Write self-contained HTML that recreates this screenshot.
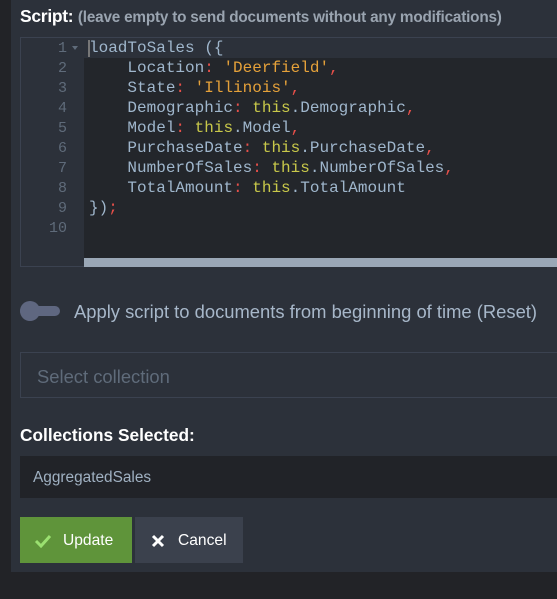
<!DOCTYPE html>
<html><head><meta charset="utf-8"><style>
*{margin:0;padding:0;box-sizing:border-box}
body{width:557px;height:599px;background:#222327;overflow:hidden;font-family:"Liberation Sans",sans-serif;position:relative}
.panel{position:absolute;left:11px;top:0;width:546px;height:572px;background:#2c313a}
.t{position:absolute;left:20px;top:6px;color:#fff;font-weight:bold;font-size:17.5px;letter-spacing:-0.3px}
.t span{color:#9aa4b0;font-size:15.3px;letter-spacing:-0.2px}
.ed{position:absolute;left:20px;top:37px;width:537px;height:230px;border:1px solid #3b4250;border-right:none;background:#2c313a}
.code{position:absolute;left:63px;top:20px;right:0;height:201px;background:#23262b}
.sb{position:absolute;left:63px;top:220px;right:0;height:9px;background:#9aa7b6}
.gut{position:absolute;left:0;top:1px;width:46px;font-family:"Liberation Mono",monospace;font-size:15px;line-height:20px;color:#5f6b7a;text-align:right}
.fold{position:absolute;left:51px;top:8px;width:0;height:0;border-left:3px solid transparent;border-right:3px solid transparent;border-top:4px solid #5f6b7a}
pre{position:absolute;left:68px;top:0;font-family:"Liberation Mono",monospace;font-size:16px;line-height:20px;color:#9fb6cc}
.s{color:#e5a13a}.k{color:#c8c84a}.p{color:#e8504a}
.cur{position:absolute;left:67px;top:2px;width:2px;height:17px;background:#777}
.tg{position:absolute;left:20px;top:306px;width:40px;height:10px;border-radius:5px;background:#5f6780}
.tg:before{content:"";position:absolute;left:0;top:-5px;width:20px;height:20px;border-radius:50%;background:#5f6780}
.lbl{position:absolute;left:74px;top:301px;color:#a7b7c9;font-size:18.4px}
.sel{position:absolute;left:20px;top:352px;width:537px;height:46px;border:1px solid #3b4250;border-right:none}
.sel span{position:absolute;left:16px;top:13px;color:#5f6b7a;font-size:18.4px}
.cs{position:absolute;left:20px;top:425px;color:#fff;font-weight:bold;font-size:17.3px}
.agg{position:absolute;left:20px;top:456px;width:537px;height:42px;background:#212328;color:#a0b1c2;font-size:15.4px;padding:13px 0 0 13px}
.btn{position:absolute;top:517px;height:46px;color:#fff;font-size:15.6px;line-height:48px}
.up{left:20px;width:112px;background:#5f943a;padding-left:43px}
.cn{left:135px;width:108px;background:#3b414d;padding-left:43px}
</style></head><body>
<div class="panel"></div>
<div class="t">Script: <span>(leave empty to send documents without any modifications)</span></div>
<div class="ed">
<div class="code"></div>
<div class="sb"></div>
<div class="gut">1<br>2<br>3<br>4<br>5<br>6<br>7<br>8<br>9<br>10</div>
<div class="fold"></div>
<div class="cur"></div>
<pre>loadToSales ({
    Location<span class="p">:</span> <span class="s">'Deerfield'</span><span class="p">,</span>
    State<span class="p">:</span> <span class="s">'Illinois'</span><span class="p">,</span>
    Demographic<span class="p">:</span> <span class="k">this</span>.Demographic<span class="p">,</span>
    Model<span class="p">:</span> <span class="k">this</span>.Model<span class="p">,</span>
    PurchaseDate<span class="p">:</span> <span class="k">this</span>.PurchaseDate<span class="p">,</span>
    NumberOfSales<span class="p">:</span> <span class="k">this</span>.NumberOfSales<span class="p">,</span>
    TotalAmount<span class="p">:</span> <span class="k">this</span>.TotalAmount
})<span class="p">;</span>
</pre>
</div>
<div class="tg"></div>
<div class="lbl">Apply script to documents from beginning of time (Reset)</div>
<div class="sel"><span>Select collection</span></div>
<div class="cs">Collections Selected:</div>
<div class="agg">AggregatedSales</div>
<div class="btn up"><svg style="position:absolute;left:14px;top:17px" width="18" height="14" viewBox="0 0 18 14"><path d="M2 7l5 5L16 2" stroke="#9be070" stroke-width="3" fill="none"/></svg>Update</div>
<div class="btn cn"><svg style="position:absolute;left:16px;top:17px" width="14" height="14" viewBox="0 0 14 14"><path d="M2 2l10 10M12 2L2 12" stroke="#fff" stroke-width="3"/></svg>Cancel</div>
</body></html>
